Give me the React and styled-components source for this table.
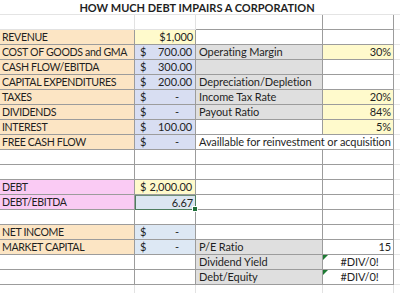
import React from "react";
import styled, { createGlobalStyle } from "styled-components";

const GlobalStyle = createGlobalStyle`
  html, body {
    margin: 0;
    padding: 0;
    background: #ffffff;
  }
  body {
    font-family: Lato, "Open Sans", "Liberation Sans", sans-serif;
    color: #1f1f1f;
  }
`;

const PEACH = "#fce5c4";
const BLUE = "#d8def2";
const SKY = "#dde8f4";
const YELLOW = "#fffacc";
const GRAY = "#dfdfdf";
const PINK = "#facbf4";

const Sheet = styled.div`
  display: grid;
  grid-template-columns: 135px 61px 127px 71px 1fr;
  grid-auto-rows: 15px;
  width: 400px;
  height: 293px;
  overflow: hidden;
  font-size: 11px;
  letter-spacing: -0.1px;
`;

const Title = styled.div`
  grid-column: 1 / 5;
  display: flex;
  align-items: center;
  justify-content: center;
  font-weight: 700;
  font-size: 11px;
  letter-spacing: 0;
  border-bottom: 1px solid #e4e4e4;
  box-sizing: border-box;
`;

const Cell = styled.div`
  position: relative;
  box-sizing: border-box;
  display: flex;
  align-items: center;
  justify-content: ${(p) => (p.$right ? "flex-end" : p.$center ? "center" : "flex-start")};
  padding: ${(p) => (p.$right ? "0 2px 0 0" : "0 0 0 3px")};
  background: ${(p) => p.$bg || "#ffffff"};
  border-right: 1px solid ${(p) => (p.$faint ? "#e2e2e2" : "#9c9c9c")};
  border-bottom: 1px solid ${(p) => (p.$faint ? "#e2e2e2" : "#9c9c9c")};
  grid-column: ${(p) => p.$span || "auto"};
  white-space: nowrap;
  line-height: 14px;
`;

const Label = styled(Cell)`
  padding-left: 2px;
  font-size: 10.6px;
  letter-spacing: -0.35px;
`;

const Money = styled(Cell)`
  justify-content: space-between;
  padding: 0 3px 0 5px;
`;

const Dash = styled.span`
  padding-right: 13px;
`;

const Selected = styled(Cell)`
  border: 1px solid #4f7d5e;
  border-top-color: #6f8f7a;
  &::after {
    content: "";
    position: absolute;
    right: -3px;
    bottom: -3px;
    width: 4px;
    height: 4px;
    background: #1f6f3a;
    border: 1px solid #ffffff;
    z-index: 2;
  }
`;

const Flag = styled.span`
  position: absolute;
  left: 0;
  top: 0;
  width: 0;
  height: 0;
  border-top: 5px solid #1e7b34;
  border-right: 5px solid transparent;
`;

const Pad = styled.div`
  box-sizing: border-box;
  border-bottom: 1px solid #e6e6e6;
`;

const money = (v, bg) =>
  v === "-" ? (
    <Money $bg={bg}>
      <span>$</span>
      <Dash>-</Dash>
    </Money>
  ) : (
    <Money $bg={bg}>
      <span>$</span>
      <span>{v}</span>
    </Money>
  );

export default function App() {
  return (
    <>
      <GlobalStyle />
      <Sheet>
        <Title>HOW MUCH DEBT IMPAIRS A CORPORATION</Title>
        <Pad />

        <Cell $faint />
        <Cell $faint />
        <Cell />
        <Cell />
        <Pad />

        <Label $bg={PEACH}>REVENUE</Label>
        <Cell $bg={YELLOW} $right>$1,000</Cell>
        <Cell />
        <Cell />
        <Pad />

        <Label $bg={PEACH}>COST OF GOODS and GMA</Label>
        {money("700.00", BLUE)}
        <Cell $bg={GRAY}>Operating Margin</Cell>
        <Cell $bg={YELLOW} $right>30%</Cell>
        <Pad />

        <Label $bg={PEACH}>CASH FLOW/EBITDA</Label>
        {money("300.00", BLUE)}
        <Cell $bg={GRAY} />
        <Cell />
        <Pad />

        <Label $bg={PEACH}>CAPITAL EXPENDITURES</Label>
        {money("200.00", BLUE)}
        <Cell $bg={GRAY}>Depreciation/Depletion</Cell>
        <Cell />
        <Pad />

        <Label $bg={PEACH}>TAXES</Label>
        {money("-", BLUE)}
        <Cell $bg={GRAY}>Income Tax Rate</Cell>
        <Cell $bg={YELLOW} $right>20%</Cell>
        <Pad />

        <Label $bg={PEACH}>DIVIDENDS</Label>
        {money("-", BLUE)}
        <Cell $bg={GRAY}>Payout Ratio</Cell>
        <Cell $bg={YELLOW} $right>84%</Cell>
        <Pad />

        <Label $bg={PEACH}>INTEREST</Label>
        {money("100.00", BLUE)}
        <Cell />
        <Cell $bg={YELLOW} $right>5%</Cell>
        <Pad />

        <Label $bg={PEACH}>FREE CASH FLOW</Label>
        {money("-", BLUE)}
        <Cell $span="3 / 5">Availlable for reinvestment or acquisition</Cell>
        <Pad />

        <Cell />
        <Cell />
        <Cell />
        <Cell />
        <Pad />

        <Cell />
        <Cell />
        <Cell />
        <Cell />
        <Pad />

        <Label $bg={PINK}>DEBT</Label>
        {money("2,000.00", YELLOW)}
        <Cell />
        <Cell />
        <Pad />

        <Label $bg={PINK}>DEBT/EBITDA</Label>
        <Selected $bg="#dce6f1" $right>6.67</Selected>
        <Cell />
        <Cell />
        <Pad />

        <Cell />
        <Cell />
        <Cell />
        <Cell />
        <Pad />

        <Label $bg={PEACH}>NET INCOME</Label>
        {money("-", SKY)}
        <Cell />
        <Cell />
        <Pad />

        <Label $bg={PEACH}>MARKET CAPITAL</Label>
        {money("-", SKY)}
        <Cell $bg={GRAY}>P/E Ratio</Cell>
        <Cell $right>15</Cell>
        <Pad />

        <Cell />
        <Cell />
        <Cell $bg={GRAY}>Dividend Yield</Cell>
        <Cell $center>
          <Flag />
          #DIV/0!
        </Cell>
        <Pad />

        <Cell />
        <Cell />
        <Cell $bg={GRAY}>Debt/Equity</Cell>
        <Cell $center>
          <Flag />
          #DIV/0!
        </Cell>
        <Pad />

        <Cell $faint />
        <Cell $faint />
        <Cell $faint />
        <Cell $faint />
        <Pad />
      </Sheet>
    </>
  );
}
